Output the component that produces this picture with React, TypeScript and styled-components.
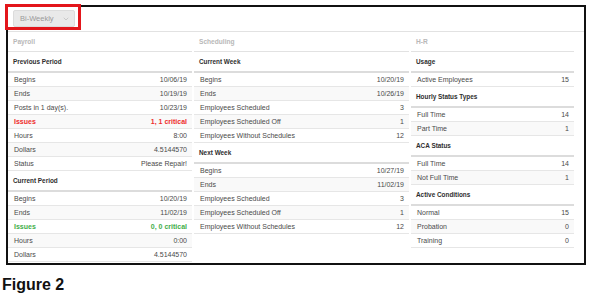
import styled, { createGlobalStyle, css } from "styled-components";
import { ChevronDown } from "lucide-react";

const GlobalStyle = createGlobalStyle`
  body {
    margin: 0;
    background: #fff;
    font-family: "Liberation Sans", Arial, sans-serif;
  }
`;

type Tone = "normal" | "bad" | "good";

type Row = { label: string; value: string; tone?: Tone };
type Section = { title: string; rows: Row[] };
type Column = { name: string; width: number; sections: Section[] };

const columns: Column[] = [
  {
    name: "Payroll",
    width: 184,
    sections: [
      {
        title: "Previous Period",
        rows: [
          { label: "Begins", value: "10/06/19" },
          { label: "Ends", value: "10/19/19" },
          { label: "Posts in 1 day(s).", value: "10/23/19" },
          { label: "Issues", value: "1, 1 critical", tone: "bad" },
          { label: "Hours", value: "8:00" },
          { label: "Dollars", value: "4.5144570" },
          { label: "Status", value: "Please Repair!" },
        ],
      },
      {
        title: "Current Period",
        rows: [
          { label: "Begins", value: "10/20/19" },
          { label: "Ends", value: "11/02/19" },
          { label: "Issues", value: "0, 0 critical", tone: "good" },
          { label: "Hours", value: "0:00" },
          { label: "Dollars", value: "4.5144570" },
        ],
      },
    ],
  },
  {
    name: "Scheduling",
    width: 215,
    sections: [
      {
        title: "Current Week",
        rows: [
          { label: "Begins", value: "10/20/19" },
          { label: "Ends", value: "10/26/19" },
          { label: "Employees Scheduled", value: "3" },
          { label: "Employees Scheduled Off", value: "1" },
          { label: "Employees Without Schedules", value: "12" },
        ],
      },
      {
        title: "Next Week",
        rows: [
          { label: "Begins", value: "10/27/19" },
          { label: "Ends", value: "11/02/19" },
          { label: "Employees Scheduled", value: "3" },
          { label: "Employees Scheduled Off", value: "1" },
          { label: "Employees Without Schedules", value: "12" },
        ],
      },
    ],
  },
  {
    name: "H-R",
    width: 163,
    sections: [
      { title: "Usage", rows: [{ label: "Active Employees", value: "15" }] },
      {
        title: "Hourly Status Types",
        rows: [
          { label: "Full Time", value: "14" },
          { label: "Part Time", value: "1" },
        ],
      },
      {
        title: "ACA Status",
        rows: [
          { label: "Full Time", value: "14" },
          { label: "Not Full Time", value: "1" },
        ],
      },
      {
        title: "Active Conditions",
        rows: [
          { label: "Normal", value: "15" },
          { label: "Probation", value: "0" },
          { label: "Training", value: "0" },
        ],
      },
    ],
  },
];

const Page = styled.div`
  position: relative;
  padding: 5px 0 0 2px;
`;

const Frame = styled.div`
  box-sizing: border-box;
  margin-left: 4px;
  width: 580px;
  height: 260px;
  border: 2px solid #111;
  background: #fff;
`;

const Toolbar = styled.div`
  box-sizing: border-box;
  height: 25px;
  padding: 3px 0 0 5px;
  border-bottom: 1px solid #e2e2e2;
`;

const PeriodButton = styled.button`
  display: flex;
  align-items: center;
  gap: 8px;
  box-sizing: border-box;
  width: 62px;
  height: 17px;
  padding: 0 0 0 6px;
  border: 1px solid #dcdcdc;
  border-radius: 2px;
  background: #e9e9e9;
  color: #9a9a9a;
  font-family: "Liberation Sans", Arial, sans-serif;
  font-size: 7.5px;
`;

/* red annotation box drawn over the period picker */
const Highlight = styled.div`
  position: absolute;
  left: 5px;
  top: 4px;
  width: 76px;
  height: 26px;
  box-sizing: border-box;
  border: 3px solid #e3161b;
  pointer-events: none;
`;

const Columns = styled.div`
  display: flex;
  gap: 2px;
`;

const ColumnBox = styled.div<{ $width: number }>`
  width: ${({ $width }) => $width}px;
`;

const ColumnHead = styled.div`
  box-sizing: border-box;
  height: 20px;
  display: flex;
  align-items: center;
  padding: 0 5px;
  border-bottom: 1px solid #e2e2e2;
  color: #b8b8b8;
  font-size: 6.6px;
  font-weight: bold;
`;

const SectionHead = styled.div`
  box-sizing: border-box;
  height: 21px;
  display: flex;
  align-items: center;
  padding: 0 5px;
  border-bottom: 2px solid #dcdcdc;
  color: #2e2e2e;
  font-size: 6.4px;
  font-weight: bold;
`;

const RowList = styled.div``;

const toneColor = {
  normal: css`
    color: #4a4a4a;
  `,
  bad: css`
    color: #ee2c2c;
    font-weight: bold;
  `,
  good: css`
    color: #3fae49;
    font-weight: bold;
  `,
};

const DataRow = styled.div<{ $tone: Tone }>`
  box-sizing: border-box;
  height: 14px;
  display: flex;
  align-items: center;
  justify-content: space-between;
  padding: 0 5px 0 6px;
  border-bottom: 1px solid #e6e6e6;
  font-size: 7px;
  ${({ $tone }) => toneColor[$tone]}

  &:nth-child(even) {
    background: #f9f9f9;
  }
`;

const Caption = styled.div`
  margin-top: 11px;
  font-size: 16px;
  line-height: 18px;
  font-weight: bold;
  color: #111;
`;

const App = () => {
  return (
    <>
      <GlobalStyle />
      <Page>
        <Frame>
          <Toolbar>
            <PeriodButton>
              Bi-Weekly
              <ChevronDown size={8} strokeWidth={1.5} color="#a8a8a8" />
            </PeriodButton>
          </Toolbar>
          <Columns>
            {columns.map((col) => (
              <ColumnBox key={col.name} $width={col.width}>
                <ColumnHead>{col.name}</ColumnHead>
                {col.sections.map((section) => (
                  <div key={section.title}>
                    <SectionHead>{section.title}</SectionHead>
                    <RowList>
                      {section.rows.map((row) => (
                        <DataRow key={row.label} $tone={row.tone ?? "normal"}>
                          <span>{row.label}</span>
                          <span>{row.value}</span>
                        </DataRow>
                      ))}
                    </RowList>
                  </div>
                ))}
              </ColumnBox>
            ))}
          </Columns>
        </Frame>
        <Highlight />
        <Caption>Figure 2</Caption>
      </Page>
    </>
  );
};

export default App;
